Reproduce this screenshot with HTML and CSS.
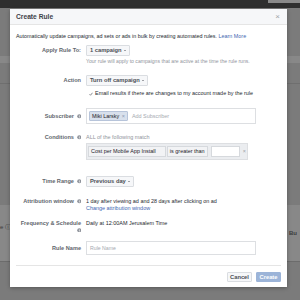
FILE: index.html
```html
<!DOCTYPE html>
<html lang="en">
<head>
    <meta charset="UTF-8">
    <meta name="viewport" content="width=device-width, initial-scale=1.0">
    <title>Create Rule</title>
    <link rel="stylesheet" href="styles.css">
</head>
<body>
    <div class="page">
        <div class="topbar"><div class="topbar-tab"></div></div>
        <div class="band band-a"></div>
        <div class="band-line"></div>
        <div class="band band-b">
            <span class="bg-left">e ⓘ</span>
            <span class="bg-right">Bu</span>
        </div>
    </div>

    <div class="modal">
        <div class="modal-header">
            <span class="modal-title">Create Rule</span>
            <span class="close">&times;</span>
        </div>

        <div class="modal-body">
            <p class="intro">Automatically update campaigns, ad sets or ads in bulk by creating automated rules. <a href="#">Learn More</a></p>

            <div class="row">
                <div class="label tall">Apply Rule To:</div>
                <div class="field">
                    <span class="btn select">1 campaign <span class="caret"></span></span>
                    <p class="hint">Your rule will apply to campaigns that are active at the time the rule runs.</p>
                </div>
            </div>

            <div class="row action-row">
                <div class="label tall">Action</div>
                <div class="field">
                    <span class="btn select">Turn off campaign <span class="caret"></span></span>
                    <p class="check">
                        <svg class="tick" viewBox="0 0 8 8"><path d="M1 4.5 L3 6.5 L7 1.5" fill="none" stroke="#4b4f56" stroke-width="1.3"/></svg>
                        Email results if there are changes to my account made by the rule
                    </p>
                </div>
            </div>

            <div class="row subscriber-row">
                <div class="label input-h">Subscriber <svg class="info" viewBox="0 0 10 10"><circle cx="5" cy="5" r="4.5" fill="#90949c"/><rect x="4.3" y="4.2" width="1.4" height="3.6" fill="#fff"/><rect x="4.3" y="2.2" width="1.4" height="1.3" fill="#fff"/></svg></div>
                <div class="field">
                    <div class="tokens">
                        <span class="token">Miki Larsky <span class="token-x">&times;</span></span>
                        <span class="placeholder">Add Subscriber</span>
                    </div>
                </div>
            </div>

            <div class="row conditions-row">
                <div class="label">Conditions <svg class="info" viewBox="0 0 10 10"><circle cx="5" cy="5" r="4.5" fill="#90949c"/><rect x="4.3" y="4.2" width="1.4" height="3.6" fill="#fff"/><rect x="4.3" y="2.2" width="1.4" height="1.3" fill="#fff"/></svg></div>
                <div class="field">
                    <p class="all-match">ALL of the following match</p>
                    <div class="condition">
                        <span class="pill metric">Cost per Mobile App Install</span>
                        <span class="pill">is greater than</span>
                        <span class="value"></span>
                        <span class="remove">&times;</span>
                    </div>
                </div>
            </div>

            <div class="row time-row">
                <div class="label tall">Time Range <svg class="info" viewBox="0 0 10 10"><circle cx="5" cy="5" r="4.5" fill="#90949c"/><rect x="4.3" y="4.2" width="1.4" height="3.6" fill="#fff"/><rect x="4.3" y="2.2" width="1.4" height="1.3" fill="#fff"/></svg></div>
                <div class="field">
                    <span class="btn select">Previous day <span class="caret"></span></span>
                </div>
            </div>

            <div class="row attribution-row">
                <div class="label short">Attribution window <svg class="info" viewBox="0 0 10 10"><circle cx="5" cy="5" r="4.5" fill="#90949c"/><rect x="4.3" y="4.2" width="1.4" height="3.6" fill="#fff"/><rect x="4.3" y="2.2" width="1.4" height="1.3" fill="#fff"/></svg></div>
                <div class="field short">
                    <div>1 day after viewing ad and 28 days after clicking on ad</div>
                    <a href="#">Change attribution window</a>
                </div>
            </div>

            <div class="row schedule-row">
                <div class="label">Frequency &amp; Schedule<br><svg class="info" viewBox="0 0 10 10"><circle cx="5" cy="5" r="4.5" fill="#90949c"/><rect x="4.3" y="4.2" width="1.4" height="3.6" fill="#fff"/><rect x="4.3" y="2.2" width="1.4" height="1.3" fill="#fff"/></svg></div>
                <div class="field">Daily at 12:00AM Jerusalem Time</div>
            </div>

            <div class="row name-row">
                <div class="label name-h">Rule Name</div>
                <div class="field">
                    <div class="text-input"><span class="placeholder">Rule Name</span></div>
                </div>
            </div>
        </div>

        <div class="modal-footer">
            <span class="btn">Cancel</span>
            <span class="btn primary">Create</span>
        </div>
    </div>
</body>
</html>
```

FILE: styles.css
```css
body {
    font-family: "Liberation Sans", Arial, sans-serif;
    margin: 0;
    width: 300px;
    height: 300px;
    overflow: hidden;
    position: relative;
    background-color: #7b7b7b;
}

.page {
    height: 300px;
}

.topbar {
    height: 8px;
    background-color: #2f2f2f;
    position: relative;
}

.topbar-tab {
    position: absolute;
    right: 0;
    top: 0;
    width: 32px;
    height: 3px;
    background-color: #8a8a8a;
}

.band {
    background-color: #888;
}

.band-a {
    margin-top: 48px;
    height: 7px;
}

.band-line {
    margin-top: 20px;
    height: 1px;
    background-color: #6f6f6f;
}

.band-b {
    margin-top: 121px;
    height: 56px;
    border-bottom: 1px solid #6c6c6c;
    position: relative;
    font-size: 6px;
    color: #3c3c3c;
}

.bg-left {
    position: absolute;
    left: 0;
    top: 18px;
}

.bg-right {
    position: absolute;
    left: 289px;
    top: 25px;
    font-weight: bold;
}

/* modal */

.modal {
    position: absolute;
    left: 10px;
    top: 9px;
    width: 277px;
    height: 278px;
    background-color: #fff;
    box-shadow: 0 1px 4px rgba(0, 0, 0, 0.3);
    font-size: 5.45px;
    line-height: 7px;
    color: #262a30;
    display: flex;
    flex-direction: column;
}

.modal-header {
    height: 16px;
    box-sizing: border-box;
    padding: 0 6px;
    background-color: #f6f7f9;
    border-bottom: 1px solid #e5e5e5;
    display: flex;
    align-items: center;
    justify-content: space-between;
}

.modal-title {
    font-size: 6.7px;
    font-weight: bold;
    color: #3d4148;
}

.close {
    font-size: 8px;
    color: #a0a3a8;
    margin-right: 1px;
}

.modal-body {
    padding: 8px 6px 0;
    flex: 1;
}

.intro {
    margin: 0;
    font-size: 5.4px;
}

a {
    color: #4267b2;
    text-decoration: none;
}

.row {
    display: grid;
    grid-template-columns: 65px 1fr;
    column-gap: 5px;
    align-items: start;
    margin-top: 5px;
}

.label {
    text-align: right;
    color: #62666d;
    font-weight: bold;
    font-size: 5.6px;
}

.label.tall {
    line-height: 11px;
}

.label.input-h {
    line-height: 16px;
}

.label.name-h {
    line-height: 14px;
}

.label.short,
.field.short {
    line-height: 6.5px;
}

.info {
    width: 4.5px;
    height: 4.5px;
    vertical-align: -0.6px;
    margin-left: 1px;
}

.btn {
    display: inline-block;
    box-sizing: border-box;
    font-size: 5.75px;
    font-weight: bold;
    color: #4b4f56;
    background-color: #f6f7f9;
    border: 1px solid #dadde1;
    border-radius: 1px;
    height: 11px;
    padding: 0 3px;
    line-height: 9px;
    white-space: nowrap;
}

.select {
    display: inline-flex;
    align-items: center;
    gap: 2px;
}

.caret {
    display: inline-block;
    width: 0;
    height: 0;
    border-left: 1.3px solid transparent;
    border-right: 1.3px solid transparent;
    border-top: 1.8px solid #4b4f56;
}

.hint {
    margin: 2px 0 0;
    color: #90949c;
    font-size: 5.1px;
}

.action-row {
    margin-top: 10px;
}

.check {
    margin: 4px 0 0;
    display: flex;
    align-items: center;
    gap: 2px;
    padding-left: 3px;
}

.tick {
    width: 4px;
    height: 4px;
}

.subscriber-row {
    margin-top: 11px;
}

.tokens {
    width: 170px;
    height: 16px;
    box-sizing: border-box;
    border: 1px solid #dddfe2;
    display: flex;
    align-items: center;
    gap: 4px;
    padding: 0 2px;
}

.token {
    background-color: #d8e0ec;
    border: 1px solid #b7c4da;
    border-radius: 1px;
    height: 10px;
    box-sizing: border-box;
    line-height: 8px;
    padding: 0 2px;
    color: #1d2129;
}

.token-x {
    color: #8b9ab5;
    margin-left: 1px;
}

.placeholder {
    color: #a5a9b0;
}

.conditions-row {
    margin-top: 10px;
}

.all-match {
    margin: 0;
    color: #90949c;
}

.condition {
    margin-top: 2px;
    width: 162px;
    height: 17px;
    box-sizing: border-box;
    background-color: #ebedf0;
    border: 1px solid #dddfe2;
    display: flex;
    align-items: center;
    padding: 0 1px;
    gap: 1px;
}

.pill {
    height: 11px;
    box-sizing: border-box;
    line-height: 9px;
    padding: 0 2px;
    background-color: #f2f3f5;
    border: 1px solid #d6d9dd;
    color: #1d2129;
    white-space: nowrap;
}

.pill.metric {
    width: 80px;
}

.value {
    width: 30px;
    height: 11px;
    box-sizing: border-box;
    background-color: #fff;
    border: 1px solid #d6d9dd;
    margin-left: 2px;
}

.remove {
    color: #a0a3a8;
    margin-left: 2px;
}

.time-row {
    margin-top: 16px;
}

.attribution-row {
    margin-top: 11px;
}

.schedule-row {
    margin-top: 8.5px;
}

.name-row {
    margin-top: 7.5px;
}

.text-input {
    width: 170px;
    height: 14px;
    box-sizing: border-box;
    border: 1px solid #dddfe2;
    line-height: 12px;
    padding: 0 3px;
    font-size: 5.2px;
}

.modal-footer {
    margin: 0 6px;
    border-top: 1px solid #e5e5e5;
    padding: 6px 0 5px;
    display: flex;
    justify-content: flex-end;
    gap: 4px;
}

.modal-footer .btn {
    height: 10px;
    width: 25px;
    line-height: 8px;
    padding: 0;
    text-align: center;
}

.modal-footer .primary {
    background-color: #9cb4d8;
    border-color: #9cb4d8;
    color: #fff;
}
```
